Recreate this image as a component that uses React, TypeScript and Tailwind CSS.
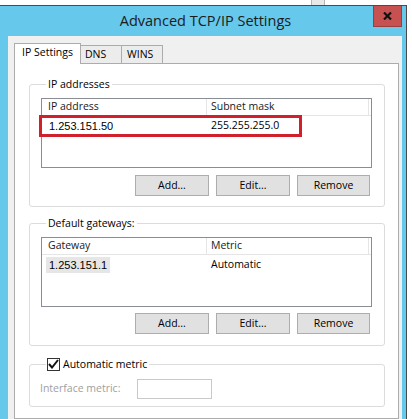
import React from "react";

function ListView({
  col1,
  col2,
  r1,
  r2,
  highlight,
}: {
  col1: string;
  col2: string;
  r1: string;
  r2: string;
  highlight?: boolean;
}) {
  return (
    <div className="w-[331px] h-[70px] border border-[#8a8d93] bg-white flex flex-col">
      <div className="h-[17px] flex border-b border-[#e5e5e5] shrink-0">
        <div className="w-[165px] border-r border-[#e5e5e5] pl-[6px] flex items-center text-[10.5px] text-[#1a1a1a]">
          {col1}
        </div>
        <div className="w-[162px] border-r border-[#e5e5e5] pl-[4px] flex items-center text-[10.5px] text-[#1a1a1a]">
          {col2}
        </div>
      </div>
      <div className="h-[18px] mt-[1px] flex items-center font-['Liberation_Sans',sans-serif] text-[11px] text-black">
        <div className="w-[166px] pl-[4px] flex items-center h-full">
          <span className={"px-[3px] leading-[16px] " + (highlight ? "bg-[#e6e6e6]" : "")}>{r1}</span>
        </div>
        <div className="pl-[3px] font-['Open_Sans',sans-serif] text-[10.5px]">{r2}</div>
      </div>
    </div>
  );
}

function Btn({ label, w }: { label: string; w: string }) {
  return (
    <div
      className={
        w +
        " h-[21px] border border-[#adadad] bg-[#e1e1e1] flex items-center justify-center text-[10.5px] text-black"
      }
    >
      {label}
    </div>
  );
}

function Buttons() {
  return (
    <div className="flex justify-end gap-[7px] pr-[14px]">
      <Btn label="Add..." w="w-[74px]" />
      <Btn label="Edit..." w="w-[74px]" />
      <Btn label="Remove" w="w-[73px]" />
    </div>
  );
}

export default function App() {
  return (
    <div className="w-[412px] h-[419px] overflow-hidden bg-white flex flex-col font-['Open_Sans',sans-serif]">
      <div className="h-[5px] flex shrink-0">
        <div className="ml-[311px] w-[14px] h-[5px] bg-[#e8e8e8] border-x border-[#b5b5b5]" />
      </div>
      <div className="flex flex-1 min-h-0">
        <div className="w-[407px] border-t border-r border-[#4a4a4a] bg-[#66c8eb] flex flex-col">
          <div className="h-[30px] flex shrink-0">
            <div className="flex-1 flex items-center justify-center pl-[38px] pb-[1px] text-[14.5px] text-[#1b1b1b]">
              Advanced TCP/IP Settings
            </div>
            <div className="w-[29px] h-[21px] mr-[4px] bg-[#c75150] border border-[#9a3e3d] border-t-0 flex items-center justify-center">
              <svg width="9" height="8" viewBox="0 0 9 8">
                <path d="M1 0.5 L8 7.5 M8 0.5 L1 7.5" stroke="#111" strokeWidth="2.2" />
              </svg>
            </div>
          </div>
          <div className="flex-1 ml-[8px] mr-[4px] bg-[#f0f0f0] pt-[7px] pl-[6px] flex flex-col">
            <div className="h-[20px] flex items-end shrink-0">
              <div className="relative z-10 w-[67px] h-[21px] -mb-px bg-white border border-b-0 border-[#acacac] flex items-center justify-center pb-[3px] text-[10.5px] text-black">
                IP Settings
              </div>
              <div className="w-[41px] h-[18px] bg-[#ececec] border-t border-r border-[#acacac] flex items-center pl-[4px] text-[10.5px] text-black">
                DNS
              </div>
              <div className="w-[41px] h-[18px] bg-[#ececec] border-t border-r border-[#acacac] flex items-center pl-[5px] text-[10.5px] text-black">
                WINS
              </div>
            </div>
            <div className="w-[385px] flex-1 bg-white border border-[#acacac] pt-[12px] flex flex-col">
              {/* IP addresses */}
              <fieldset className="w-[356px] ml-[14px] border border-[#dcdcdc] rounded-[3px] pl-[11px] pb-[10px]">
                <legend className="ml-[5px] px-[2px] leading-[16px] text-[10.5px] text-black">IP addresses</legend>
                <div className="relative mt-[6px]">
                  <ListView col1="IP address" col2="Subnet mask" r1="1.253.151.50" r2="255.255.255.0" />
                  <div className="absolute left-[-2px] top-[17px] w-[263px] h-[22px] border-[3px] border-[#d0202c]" />
                </div>
                <div className="mt-[7px]">
                  <Buttons />
                </div>
              </fieldset>

              {/* Default gateways */}
              <fieldset className="mt-[8px] w-[356px] ml-[14px] border border-[#dcdcdc] rounded-[3px] pl-[11px] pb-[11px]">
                <legend className="ml-[5px] px-[2px] leading-[16px] text-[10.5px] text-black">Default gateways:</legend>
                <div className="mt-[6px]">
                  <ListView col1="Gateway" col2="Metric" r1="1.253.151.1" r2="Automatic" highlight />
                </div>
                <div className="mt-[6px]">
                  <Buttons />
                </div>
              </fieldset>

              {/* Automatic metric */}
              <fieldset className="mt-[10px] w-[356px] ml-[14px] border border-[#dcdcdc] rounded-[3px] pl-[10px] pb-[7px]">
                <legend className="ml-[6px] pl-[1px] pr-[2px] leading-[16px] flex items-center gap-[3px] text-[10.5px] text-black">
                  <span className="w-[13px] h-[13px] border border-[#333] bg-white flex items-center justify-center">
                    <svg width="11" height="10" viewBox="0 0 11 10">
                      <path d="M1 5 L4 8.5 L10 1" fill="none" stroke="#111" strokeWidth="2" />
                    </svg>
                  </span>
                  Automatic metric
                </legend>
                <div className="mt-[7px] flex items-center">
                  <div className="w-[97px] text-[10.5px] text-[#a0a0a0]">Interface metric:</div>
                  <div className="w-[75px] h-[20px] border border-[#c9c9c9] bg-white" />
                </div>
              </fieldset>
            </div>
          </div>
        </div>
        <div className="flex-1 bg-white" />
      </div>
    </div>
  );
}
